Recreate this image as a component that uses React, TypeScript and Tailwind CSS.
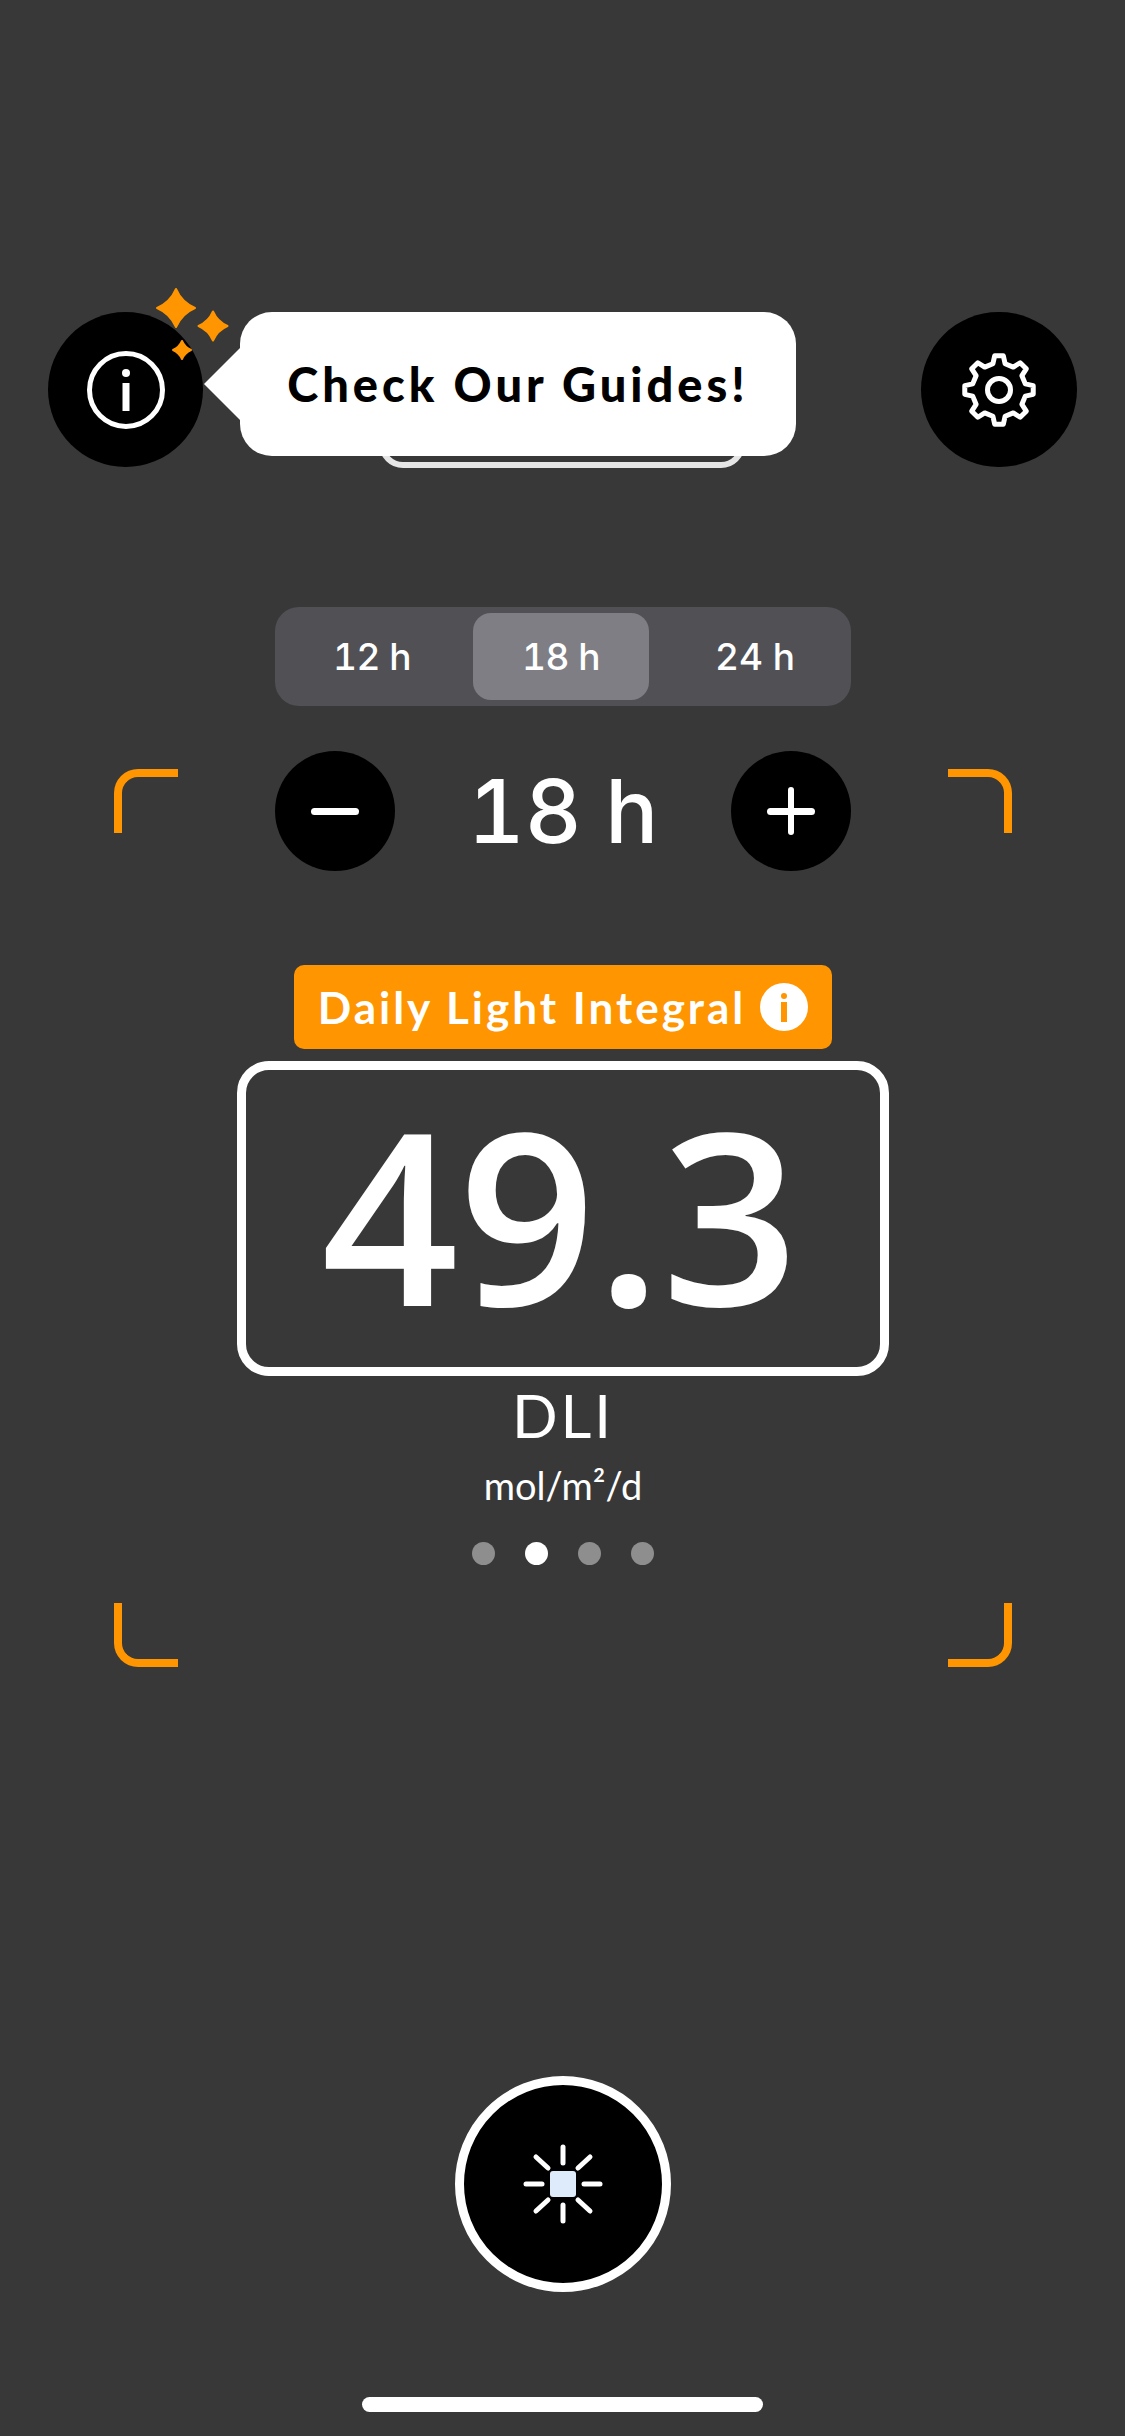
const FONT = "font-['Lato',sans-serif]";

function gearPath(cx: number, cy: number, outer: number, root: number, teeth: number) {
  const pts: string[] = [];
  const step = (Math.PI * 2) / teeth;
  for (let i = 0; i < teeth; i++) {
    const a = -Math.PI / 2 + i * step;
    const offs: [number, number][] = [
      [-0.29, root],
      [-0.16, outer],
      [0.16, outer],
      [0.29, root],
    ];
    for (const [o, r] of offs) {
      const t = a + o * step;
      pts.push(`${(cx + r * Math.cos(t)).toFixed(2)},${(cy + r * Math.sin(t)).toFixed(2)}`);
    }
  }
  return pts.join(" ");
}

function star(cx: number, cy: number, r: number) {
  const c = r * 0.3;
  return `M${cx} ${cy - r}Q${cx + c} ${cy - c} ${cx + r} ${cy}Q${cx + c} ${cy + c} ${cx} ${cy + r}Q${cx - c} ${cy + c} ${cx - r} ${cy}Q${cx - c} ${cy - c} ${cx} ${cy - r}Z`;
}

function Sparkles() {
  return (
    <svg className="absolute left-[92px] top-[-30px]" width="100" height="90" viewBox="0 0 100 90">
      <g fill="#ff9500" stroke="#ff9500" strokeWidth="2" strokeLinejoin="round">
        <path d={star(36, 26, 19)} />
        <path d={star(73, 44, 14.5)} />
        <path d={star(42, 68, 9)} />
      </g>
    </svg>
  );
}

function InfoGlyph() {
  return (
    <svg width="84" height="84" viewBox="0 0 84 84">
      <circle cx="42" cy="42" r="36.5" fill="none" stroke="white" strokeWidth="5" />
      <circle cx="42" cy="25" r="4" fill="white" />
      <rect x="38.5" y="35" width="7" height="28" fill="white" />
    </svg>
  );
}

function GearGlyph() {
  return (
    <svg width="84" height="84" viewBox="0 0 84 84">
      <polygon
        points={gearPath(42, 42, 34.5, 27, 8)}
        fill="none"
        stroke="white"
        strokeWidth="5"
        strokeLinejoin="round"
      />
      <circle cx="42" cy="42" r="11.5" fill="none" stroke="white" strokeWidth="5" />
    </svg>
  );
}

function SunGlyph() {
  return (
    <svg width="84" height="84" viewBox="0 0 84 84">
      <g stroke="white" strokeWidth="5" strokeLinecap="round">
        <line x1="42" y1="5" x2="42" y2="21" />
        <line x1="42" y1="63" x2="42" y2="79" />
        <line x1="5" y1="42" x2="21" y2="42" />
        <line x1="63" y1="42" x2="79" y2="42" />
        <line x1="15" y1="15" x2="27" y2="26" />
        <line x1="69" y1="15" x2="57" y2="26" />
        <line x1="15" y1="69" x2="27" y2="58" />
        <line x1="69" y1="69" x2="57" y2="58" />
      </g>
      <rect x="29" y="29" width="26" height="26" rx="3" fill="#deebfb" />
    </svg>
  );
}

export default function App() {
  return (
    <div className={`${FONT} w-[1125px] h-[2436px] bg-[#383838] text-white flex flex-col items-center pt-[312px] overflow-hidden`}>
      {/* top bar */}
      <div className="relative w-full h-[155px] px-[48px] flex items-center justify-between">
        <div className="relative w-[155px] h-[155px] rounded-full bg-black flex items-center justify-center">
          <InfoGlyph />
          <Sparkles />
        </div>
        <div className="absolute left-[379px] top-[60px] w-[366px] h-[96px] rounded-[24px] border-[6px] border-[#e6e6e6]" />
        <div className="absolute left-[240px] top-0 w-[556px] h-[144px] rounded-[32px] bg-white flex items-center justify-center">
          <div className="absolute left-[-36px] top-[36px] w-0 h-0 border-y-[36px] border-y-transparent border-r-[36px] border-r-white" />
          <span className="text-black text-[47px] font-black tracking-[4px] leading-none whitespace-nowrap">Check Our Guides!</span>
        </div>
        <div className="w-[156px] h-[155px] rounded-full bg-black flex items-center justify-center">
          <GearGlyph />
        </div>
      </div>

      {/* duration segments */}
      <div className="ml-px mt-[140px] w-[576px] h-[99px] rounded-[24px] bg-[#505055] flex items-center px-[6px] text-[37px] font-medium font-['Inter',sans-serif] tabular-nums">
        <div className="w-[192px] pr-[10px] text-center tracking-[-0.5px]">12 h</div>
        <div className="w-[176px] h-[87px] rounded-[18px] bg-[#7e7e84] flex items-center justify-center tracking-[-0.5px]">18 h</div>
        <div className="flex-1 pl-[16px] text-center">24 h</div>
      </div>

      {/* framed area */}
      <div className="ml-px relative mt-[45px] w-[898px] flex flex-col items-center h-[916px]">
        <div className="absolute left-0 top-[18px] w-[64px] h-[64px] border-t-[8px] border-l-[8px] border-[#ff9500] rounded-tl-[24px]" />
        <div className="absolute right-0 top-[18px] w-[64px] h-[64px] border-t-[8px] border-r-[8px] border-[#ff9500] rounded-tr-[24px]" />
        <div className="absolute left-0 bottom-0 w-[64px] h-[64px] border-b-[8px] border-l-[8px] border-[#ff9500] rounded-bl-[24px]" />
        <div className="absolute right-0 bottom-0 w-[64px] h-[64px] border-b-[8px] border-r-[8px] border-[#ff9500] rounded-br-[24px]" />

        <div className="w-[576px] h-[120px] flex items-center justify-between">
          <div className="w-[120px] h-[120px] rounded-full bg-black flex items-center justify-center">
            <div className="w-[48px] h-[7px] rounded-full bg-white" />
          </div>
          <div className="text-[88px] leading-none font-medium font-['Inter',sans-serif] tabular-nums">18 h</div>
          <div className="relative w-[120px] h-[120px] rounded-full bg-black flex items-center justify-center">
            <div className="w-[48px] h-[7px] rounded-full bg-white" />
            <div className="absolute w-[6px] h-[48px] rounded-full bg-white" />
          </div>
        </div>

        <div className="mt-[94px] w-[538px] h-[84px] rounded-[10px] bg-[#ff9500] flex items-center justify-center gap-[14px]">
          <span className="text-[44px] font-bold tracking-[3px] leading-none whitespace-nowrap">Daily Light Integral</span>
          <span className="w-[48px] h-[48px] rounded-full bg-white flex flex-col items-center justify-center gap-[3px]">
            <span className="w-[6px] h-[6px] rounded-full bg-[#ff9500]" />
            <span className="w-[6px] h-[20px] bg-[#ff9500]" />
          </span>
        </div>

        <div className="mt-[12px] w-[652px] h-[315px] rounded-[32px] border-[9px] border-white flex items-center justify-center">
          <span className="text-[240px] leading-none font-semibold font-['Open_Sans',sans-serif] pr-[6px] pb-[12px]">49.3</span>
        </div>

        <div className="mt-[4px] text-[60px] leading-[70px] tracking-[3px]">DLI</div>
        <div className="mt-[10px] text-[38px] leading-[50px]">mol/m²/d</div>
        <div className="mt-[32px] flex gap-[30px]">
          <div className="w-[23px] h-[23px] rounded-full bg-[#8e8e8e]" />
          <div className="w-[23px] h-[23px] rounded-full bg-white" />
          <div className="w-[23px] h-[23px] rounded-full bg-[#8e8e8e]" />
          <div className="w-[23px] h-[23px] rounded-full bg-[#8e8e8e]" />
        </div>
      </div>

      {/* capture button */}
      <div className="ml-px mt-[409px] w-[216px] h-[216px] rounded-full bg-black border-[9px] border-white flex items-center justify-center">
        <SunGlyph />
      </div>

      {/* home indicator */}
      <div className="mt-[105px] w-[401px] h-[15px] rounded-full bg-white" />
    </div>
  );
}
